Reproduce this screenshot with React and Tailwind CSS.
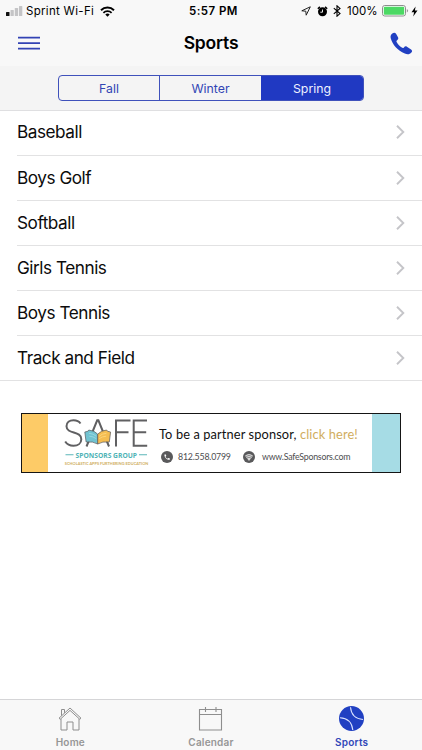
import React from "react";

const sports = ["Baseball", "Boys Golf", "Softball", "Girls Tennis", "Boys Tennis", "Track and Field"];

const PHONE =
  "M6.6 10.8c1.4 2.8 3.8 5.1 6.6 6.6l2.2-2.2c.3-.3.7-.4 1-.2 1.1.4 2.3.6 3.6.6.6 0 1 .4 1 1V20c0 .6-.4 1-1 1C10.600 21 3 13.400 3 4c0-.6.4-1 1-1h3.500c.6 0 1 .4 1 1 0 1.200.2 2.500.6 3.600.1.4 0 .7-.2 1z";

function StatusBar() {
  return (
    <div className="flex h-[22px] items-center pl-[6px] pr-[4px] text-[11.5px] leading-[22px] text-black">
      <div className="flex w-[183px] items-center">
        <svg width="17" height="10" viewBox="0 0 17 10">
          <rect x="0" y="6" width="3.500" height="4" rx="0.6" fill="#111" />
          <rect x="4.500" y="4" width="3.300" height="6" rx="0.6" fill="#c4c4c6" />
          <rect x="8.800" y="2" width="3.300" height="8" rx="0.6" fill="#c4c4c6" />
          <rect x="13" y="0" width="3.300" height="10" rx="0.6" fill="#c4c4c6" />
        </svg>
        <span className="ml-[3px] w-[69px] whitespace-nowrap tracking-[0.3px]">Sprint Wi-Fi</span>
        <svg className="ml-[5px]" width="15" height="11" viewBox="0 0 15 11" fill="none" stroke="#000">
          <path d="M1 4.200a9.300 9.300 0 0 1 13 0" strokeWidth="2" />
          <path d="M3.400 6.800a5.900 5.900 0 0 1 8.200 0" strokeWidth="1.800" />
          <path d="M7.500 10.800 5.300 8.600a3.200 3.200 0 0 1 4.400 0z" fill="#000" stroke="none" />
        </svg>
      </div>
      <span className="w-[50px] whitespace-nowrap font-semibold tracking-[0.45px]">5:57 PM</span>
      <div className="flex flex-1 items-center justify-end">
        <svg width="10" height="10" viewBox="0 0 10 10" fill="none" stroke="#222" strokeWidth="1" strokeLinejoin="round">
          <path d="M9.300.8.8 4.800l4 .4.4 4z" />
        </svg>
        <svg className="ml-[6px]" width="11" height="11" viewBox="0 0 11 11">
          <circle cx="5.500" cy="5.800" r="4.500" fill="#000" />
          <path d="M.8 2.700 2.900.9M10.200 2.700 8.100.9" stroke="#000" strokeWidth="1.500" />
          <path d="M5.500 3.500V6.200H3.300" stroke="#fff" strokeWidth="0.900" fill="none" />
        </svg>
        <svg className="ml-[5px]" width="8" height="12" viewBox="0 0 8 12" fill="none" stroke="#000" strokeWidth="1.100">
          <path d="M.8 3.200 7 8.600 4 11.200V.8l3 2.600L.8 8.800" />
        </svg>
        <span className="ml-[6px] w-[31px] whitespace-nowrap tracking-[0px]">100%</span>
        <svg className="ml-[4px]" width="27" height="12" viewBox="0 0 27 12">
          <rect x="0.500" y="0.500" width="23" height="10.500" rx="2.300" fill="#fff" stroke="#8d8d8d" />
          <rect x="1.800" y="1.800" width="20.400" height="7.900" rx="1" fill="#4cd964" />
          <path d="M24.800 4v3.500q1.300-.4 1.300-1.750T24.800 4z" fill="#999" />
        </svg>
        <svg className="ml-[2px]" width="7" height="11" viewBox="0 0 7 11">
          <path d="M4.600.5.5 6.200h2.600L2.200 10.500l4.300-6H3.900z" fill="#000" />
        </svg>
      </div>
    </div>
  );
}

function NavBar() {
  return (
    <div className="grid h-[44px] grid-cols-[1fr_auto_1fr] items-center pl-[18px] pr-[9px]">
      <svg className="-mt-[2px]" width="22" height="14" viewBox="0 0 22 14" stroke="#3343b4" strokeWidth="1.800">
        <path d="M0 1.700h22M0 7.200h22M0 12.600h22" />
      </svg>
      <h1 className="-mt-[2px] mr-[9px] text-[17.5px] font-semibold leading-[22px] tracking-[-0.2px] text-black">Sports</h1>
      <svg className="-mt-[2px] justify-self-end" width="23" height="23" viewBox="0 0 23 23">
        <path
          d="M2.300 1.400C4 .2 5.300.6 6.200 2L8 5.200c.6 1.200.2 2.200-.9 3-.9.600-.8 1.200-.3 2.100 1.400 2.400 2.800 3.800 5 5.300.9.600 1.500.6 2.100-.2.900-1.100 1.900-1.400 3-.7l4.200 2.700c1.200.8 1.300 1.900.3 3.100-1.600 1.900-3.800 2.300-6.600 1.100C7.500 18.400 2.600 12.900.8 6.600.2 4.300.6 2.600 2.300 1.400z"
          fill="#2140c2"
        />
      </svg>
    </div>
  );
}

function Segments() {
  return (
    <div className="h-[45px] border-b border-[#dfdfe1] bg-[#f4f4f4] pl-[58px] pr-[58px] pt-[8.5px]">
      <div className="grid h-[26.5px] grid-cols-[100px_102px_1fr] overflow-hidden rounded-[4px] border border-[#3f51bb] text-center text-[12.3px] leading-[26px] text-[#3145b4]">
        <div>Fall</div>
        <div className="border-l border-[#3f51bb]">Winter</div>
        <div className="bg-[#2039c2] text-[#eef0ff]">Spring</div>
      </div>
    </div>
  );
}

function SportRow({ name, last }) {
  return (
    <li className={last ? "h-[45.17px] border-b border-[#e2e2e3]" : "h-[45.17px] pl-[17px]"}>
      <div
        className={
          last
            ? "flex h-full items-center justify-between pl-[17px] pr-[17px]"
            : "flex h-full items-center justify-between border-b border-[#e2e2e3] pr-[17px]"
        }
      >
        <span className="text-[17.2px] leading-[22px] tracking-[-0.47px] text-[#0c0c0c]">{name}</span>
        <svg width="9" height="14" viewBox="0 0 9 14" fill="none" stroke="#c5c5c9" strokeWidth="1.900">
          <path d="m1 .8 6.300 6.200L1 13.200" />
        </svg>
      </div>
    </li>
  );
}

function SafeLogo() {
  return (
    <svg className="mt-[1px] shrink-0 overflow-visible" width="86" height="56" viewBox="0 0 86 56">
      <g fill="none" stroke="#606062" strokeWidth="2">
        <path d="M16.500 8.500C15 6.300 12.500 5.300 9.500 5.300c-4 0-7 2.200-7 5.900 0 8.300 14.800 4.400 14.800 13 0 4-3.300 6.500-7.800 6.500-3.700 0-6.600-1.500-8.300-4.200" />
        <path d="M22.500 31.500 33.200 5.300h1.200L45 31.500" />
        <path d="M66.500 5.600H52v26M52 17.200h12.500M83 5.600H69.700v25.200H83.200M69.700 17.200h12.500" />
      </g>
      <g stroke="#58585a" strokeWidth="0.700" strokeLinejoin="round">
        <path d="m20.800 17 3-.7 1-1.300q5.800.6 8.900 4.200v9.800q-4.600-2.800-11.600-2z" fill="#71c3d1" />
        <path d="m46.600 17-3-.7-1-1.300q-5.800.6-8.900 4.200v9.800q4.600-2.800 11.600-2z" fill="#f5bd51" />
      </g>
      <path d="M25 18.300q4.500.3 7.300 3M25.300 21.200q4 .2 7 2.500" fill="none" stroke="#a8dfe5" strokeWidth="0.700" />
      <path d="M42.400 18.300q-4.500.3-7.300 3M42.100 21.200q-4 .2-7 2.500" fill="none" stroke="#ffdc89" strokeWidth="0.700" />
      <path d="M1.500 39.800H9.500M75 39.800H83" stroke="#5cb6b9" strokeWidth="1.100" />
      <text x="11.500" y="42.500" textLength="61.500" lengthAdjust="spacingAndGlyphs" fontFamily="Open Sans, sans-serif" fontWeight="700" fontSize="7.300" fill="#4fb3b6">
        SPONSORS GROUP
      </text>
      <text x="0.800" y="50" textLength="83.500" lengthAdjust="spacingAndGlyphs" fontFamily="Lato, sans-serif" fontWeight="700" fontSize="4.400" fill="#cfae5e">
        SCHOLASTIC APPS FURTHERING EDUCATION
      </text>
    </svg>
  );
}

function Banner() {
  return (
    <div className="ml-[21px] mt-[32px] flex h-[60px] w-[380px] border-[1.5px] border-[#151515] bg-white font-[Lato,sans-serif]">
      <div className="w-[26px] bg-[#fdcb67]" />
      <div className="w-[111px] pl-[16px]">
        <SafeLogo />
      </div>
      <div className="flex-1 pt-[11px]">
        <p className="whitespace-nowrap text-[12.8px] leading-[18px] tracking-[0.12px] text-[#111]">
          To be a partner sponsor, <span className="text-[#d1ad5e]">click here!</span>
        </p>
        <div className="mt-[8px] flex items-center pl-[2px] text-[8.8px] leading-[12px] text-[#4d4d4f]">
          <svg width="12" height="12" viewBox="0 0 24 24">
            <circle cx="12" cy="12" r="12" fill="#59595b" />
            <path d={PHONE} fill="#fff" transform="translate(5 5) scale(.6)" />
          </svg>
          <span className="ml-[5px] w-[65px] whitespace-nowrap tracking-[-0.2px]">812.558.0799</span>
          <svg width="12" height="12" viewBox="0 0 12 12">
            <circle cx="6" cy="6" r="6" fill="#59595b" />
            <path d="M2 4.800q4-3.500 8 0L6 10z" fill="#d9d9d9" />
            <path d="M2.800 5.600q3.200-2.500 6.400 0M4 7q2-1.500 4 0" fill="none" stroke="#59595b" strokeWidth="0.600" />
          </svg>
          <span className="ml-[7px] whitespace-nowrap tracking-[-0.23px]">www.SafeSponsors.com</span>
        </div>
      </div>
      <div className="w-[28px] bg-[#a6dce5]" />
    </div>
  );
}

function TabBar() {
  return (
    <nav className="grid h-[51px] grid-cols-3 border-t border-[#d5d5d7] bg-[#f8f8f8] text-center text-[10px] font-semibold leading-[12px] tracking-[0.2px] text-[#969696]">
      <div className="flex flex-col items-center pt-[6px]">
        <svg width="24" height="25" viewBox="0 0 24 25" fill="none" stroke="#8e8e8e" strokeWidth="1">
          <path d="M1 12.200 12 2l11 10.200-1.200 1.100L12 4.400l-9.800 8.900z" />
          <path d="M3 12.800V24h6V16h6v8h6V12.800" />
          <path d="M3.500 9.700V3.500h3v3.400" />
        </svg>
        <span className="mt-[5px]">Home</span>
      </div>
      <div className="flex flex-col items-center pt-[6px]">
        <svg width="25" height="25" viewBox="0 0 25 25" fill="none" stroke="#8e8e8e" strokeWidth="1.100">
          <path d="M1.500 3.500h22v20.500h-22zM1.500 8.500h22M7.500 1v5M18 1v5" />
        </svg>
        <span className="mt-[5px]">Calendar</span>
      </div>
      <div className="flex flex-col items-center pt-[6px] text-[#3047b8]">
        <svg width="25" height="25" viewBox="0 0 25 25" fill="none">
          <circle cx="12.500" cy="12.500" r="12.500" fill="#2140c2" />
          <path d="M11.500 1.200Q12.500 12.500 24 13.500M1 11.800Q12.500 12.500 13.800 24" stroke="#d9e1ff" strokeWidth="1.100" />
        </svg>
        <span className="mt-[5px]">Sports</span>
      </div>
    </nav>
  );
}

export default function App() {
  return (
    <div className="flex h-[750px] w-[422px] flex-col overflow-hidden bg-white font-[Inter,sans-serif]">
      <header className="bg-[#f8f8f8]">
        <StatusBar />
        <NavBar />
        <Segments />
      </header>
      <main className="-mt-[0.6px] flex-1">
        <ul>
          {sports.map((name, i) => (
            <SportRow key={name} name={name} last={i === sports.length - 1} />
          ))}
        </ul>
        <Banner />
      </main>
      <TabBar />
    </div>
  );
}
